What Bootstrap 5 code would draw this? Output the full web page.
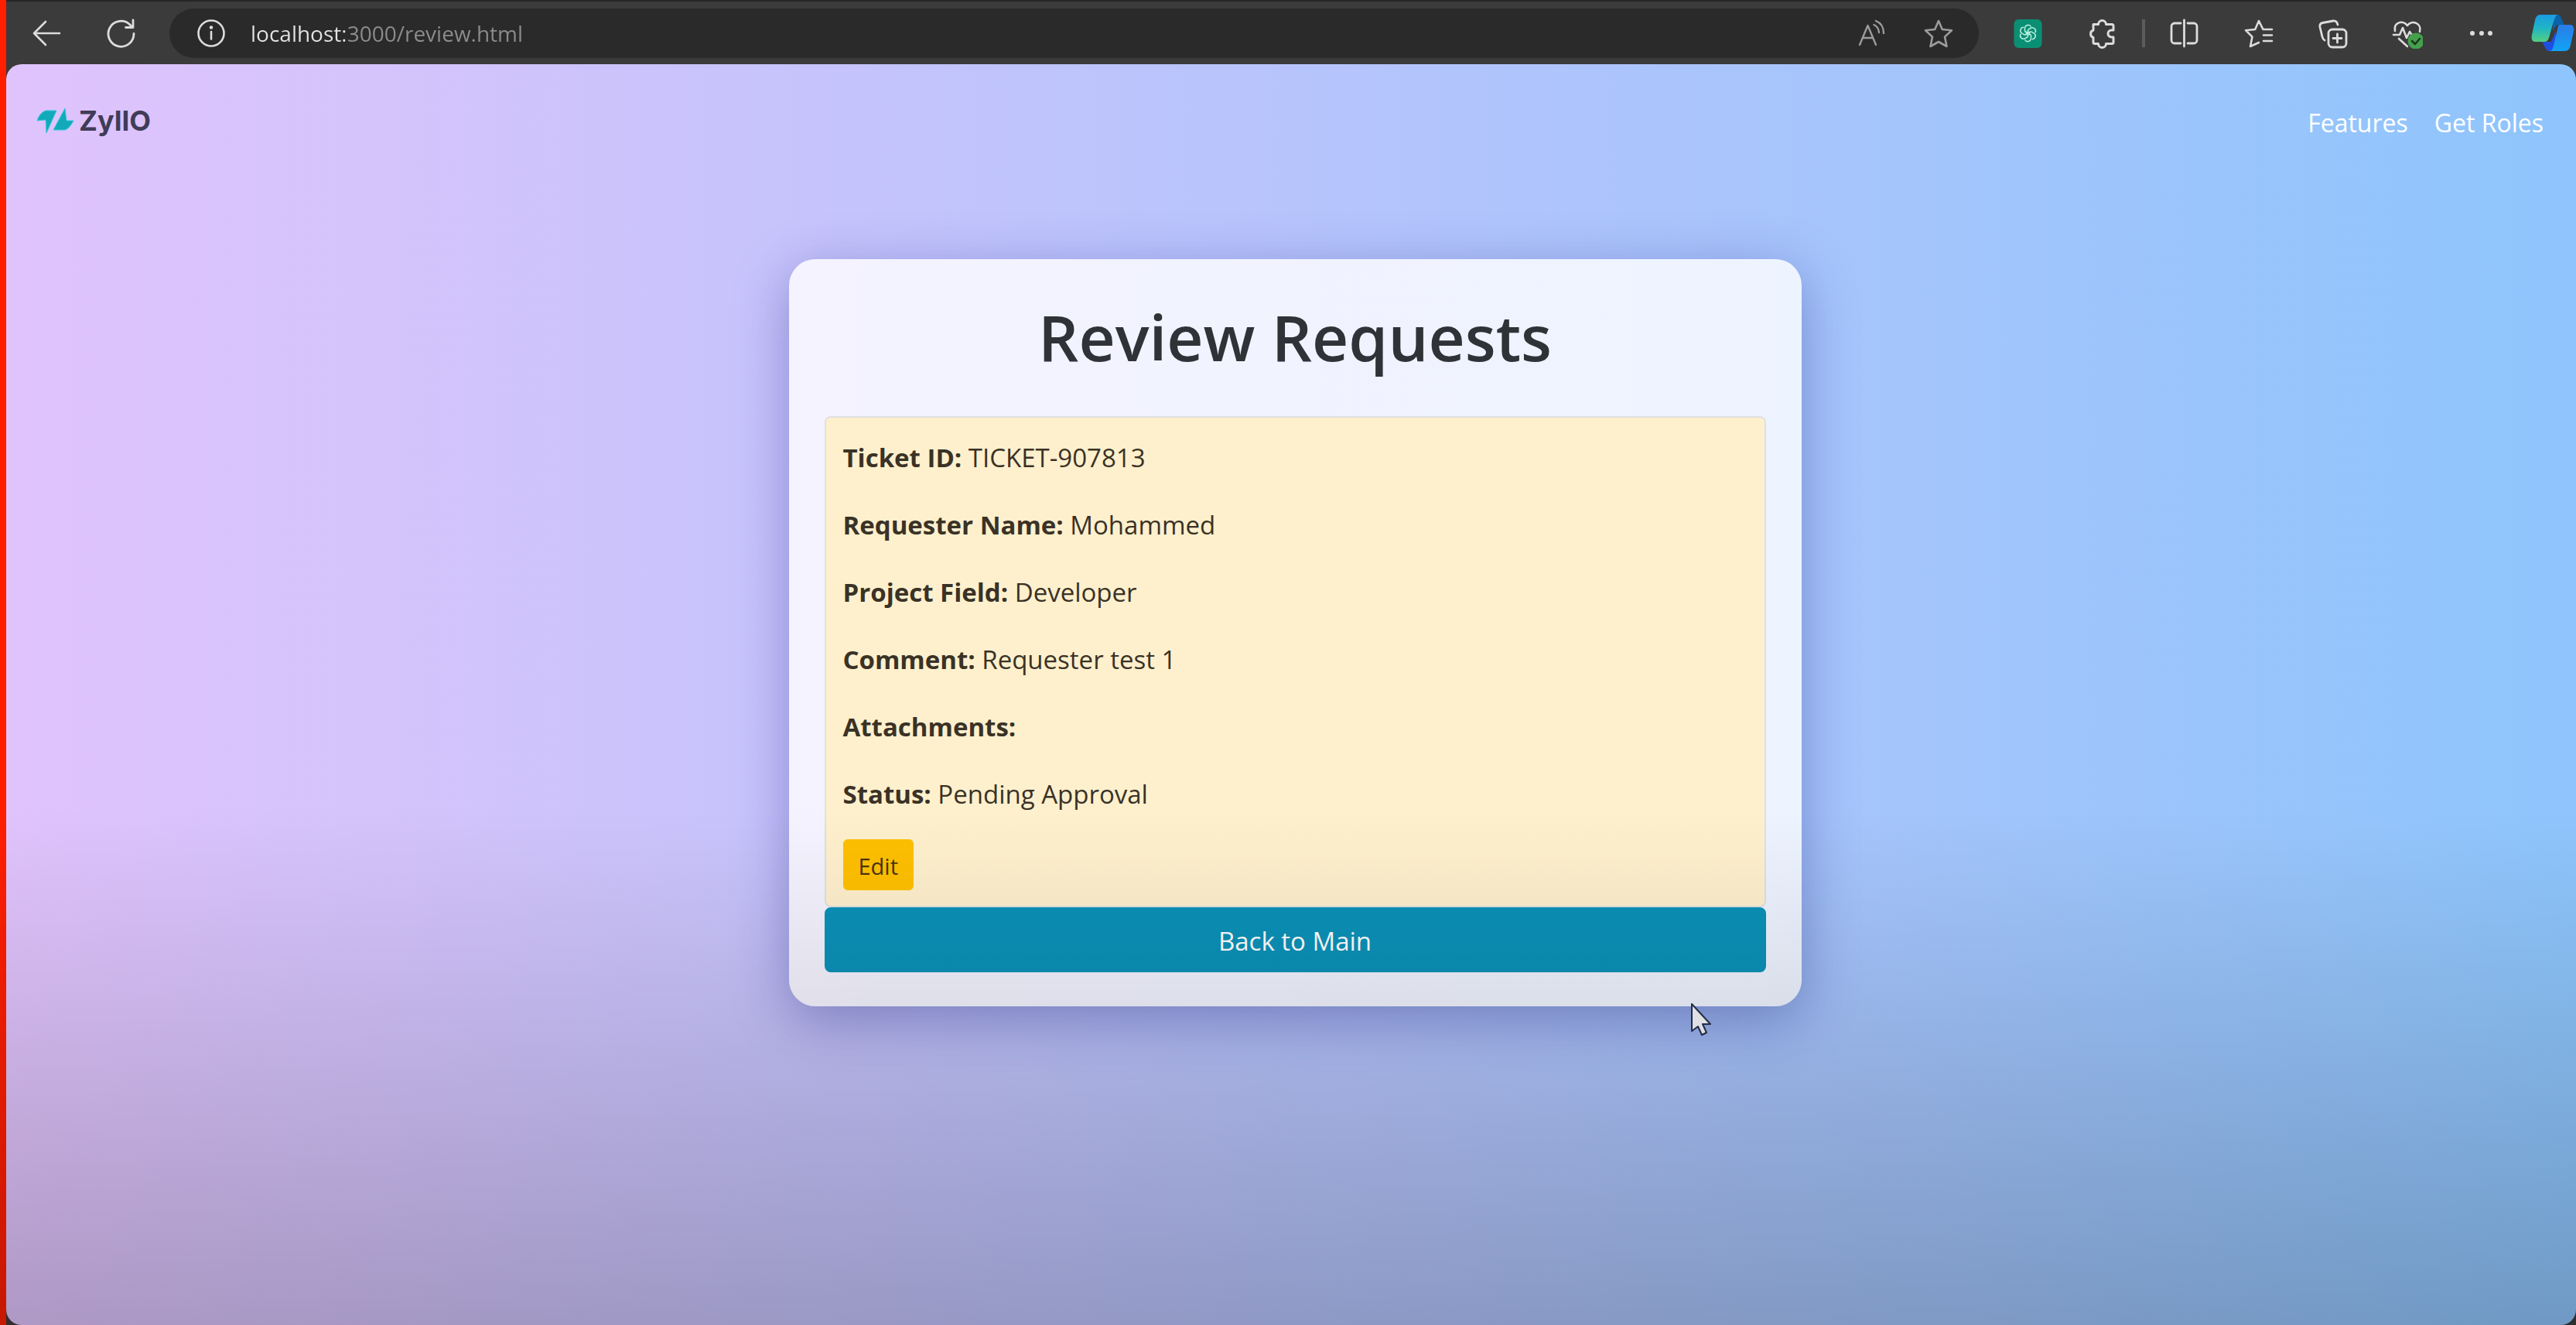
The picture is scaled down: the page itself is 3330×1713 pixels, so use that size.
<!DOCTYPE html>
<html lang="en">
<head>
<meta charset="utf-8">
<meta name="viewport" content="width=device-width, initial-scale=1">
<title>Review Requests</title>
<link href="https://cdn.jsdelivr.net/npm/bootstrap@5.3.0/dist/css/bootstrap.min.css" rel="stylesheet">
<style>
  body { font-family: "Open Sans", "Noto Sans", sans-serif; font-size: 33px; line-height: 52px; color: #212529; background: #3b3b3b; }
  .edge-strip { width: 8px; background: #ff1e00; }
  .toolbar { height: 83px; padding: 0 2px 0 34px; background: #3b3b3b; border-top: 2px solid #262626; color: #dcdcdc; }
  .tool { width: 40px; height: 40px; padding: 0; border: 0; background: none; color: inherit; display: block; flex: none; }
  .tool svg { width: 40px; height: 40px; display: block; }
  .tool-wide, .tool-wide svg { width: 56px; height: 56px; }
  .tool-wide { margin-left: -12px; }
  .tools-left { gap: 54px; margin-right: 43px; }
  .tools-right { gap: 56px; margin-left: 44px; }
  .tool-sep { width: 4px; height: 36px; margin: 0 -25px; background: #5c5c5c; }
  .address { height: 64px; padding: 0 32px 0 35px; border-radius: 32px; background: #2a2a2a; gap: 30px; }
  .address input { font-size: 28px; line-height: 40px; color: #9a9a9a; border: 0; outline: 0; padding: 0; height: 48px;
    background: linear-gradient(90deg, #e4e4e4 122px, #8c8c8c 122px); -webkit-background-clip: text; background-clip: text; -webkit-text-fill-color: transparent; }
  .address-icons { gap: 46px; color: #9b9b9b; }
  .viewport { border-radius: 20px; background: linear-gradient(90deg, #e0c3fc, #8ec5fc); }
  .site-nav { padding: 44px 42px 0 38px; }
  .brand-name { font-family: Inter, sans-serif; font-weight: 700; font-size: 36px; line-height: 52px; color: #403c58; gap: 6px; }
  .site-nav .nav { gap: 34px; padding-top: 6px; }
  .site-nav .nav-link { color: #fff; padding: 0; font-size: 32px; }
  .main-area { padding: 150px 0 0 10px; }
  .review-panel { width: 100%; max-width: 1309px; padding: 48px 46px 44px; border-radius: 34px; background: rgba(255,255,255,.8); box-shadow: 0 17px 70px rgba(31,38,135,.37); }
  .review-panel h1 { font-size: 82px; line-height: 104px; font-weight: 600; margin: 0 0 51px; color: #2f3338; }
  .ticket { padding: 26px 24px 20px 22px; background: #fff0cd; border: 2px solid #dfe0e0; border-radius: 8px; color: #3a3226; }
  .ticket p { margin: 0 0 35px; }
  .ticket p:last-of-type { margin-bottom: 32px; }
  .btn-edit { font-size: 29px; line-height: 42px; padding: 12px 18px 8px; border: 2px solid #ffc107; border-radius: 6px; background: #ffc000; color: #4a3510; }
  .btn-back { font-size: 33px; line-height: 52px; padding: 16px 14px 12px; border: 2px solid #0b91b8; border-radius: 8px; background: #0b91b8; color: #fff; }
  .btn-back:hover, .btn-edit:hover { background: inherit; }
  .shade { inset: 0; pointer-events: none; background: linear-gradient(transparent 61%, rgba(0,0,0,.22)); z-index: 5; }
  .pointer { left: 2184px; top: 1296px; width: 32px; height: 44px; pointer-events: none; z-index: 4; }
</style>
<script src="https://cdn.jsdelivr.net/npm/bootstrap@5.3.0/dist/js/bootstrap.bundle.min.js"></script>
</head>
<body class="d-flex min-vh-100 position-relative">
<div class="edge-strip flex-shrink-0"></div>
<div class="d-flex flex-column flex-grow-1">
  <header class="toolbar d-flex align-items-center">
    <div class="tools-left d-flex">
      <button class="tool" type="button" aria-label="Back"><svg viewBox="0 0 40 40" fill="none" stroke="currentColor" stroke-width="2.6" stroke-linecap="round" stroke-linejoin="round"><path d="M35 20H2M17 5L2 20l15 15"/></svg></button>
      <button class="tool" type="button" aria-label="Reload"><svg viewBox="0 0 40 40" fill="none" stroke="currentColor" stroke-width="2.8" stroke-linecap="round" stroke-linejoin="round"><path d="M37 20.500A16.500 16.500 0 1 1 31 8l4 4M36 3v9.500h-9.500"/></svg></button>
    </div>
    <div class="address d-flex align-items-center flex-grow-1">
      <svg width="40" height="40" viewBox="0 0 40 40" fill="none" stroke="currentColor" stroke-width="2.600" stroke-linecap="round" aria-hidden="true"><circle cx="19" cy="20" r="16.500"/><path d="M19 18v9.500"/><circle cx="19" cy="12.500" r="1" fill="currentColor"/></svg>
      <input class="flex-grow-1" type="text" aria-label="Address" value="localhost:3000/review.html">
      <div class="address-icons d-flex">
        <button class="tool" type="button" aria-label="Read aloud"><svg viewBox="0 0 40 40" fill="none" stroke="currentColor" stroke-width="2.400" stroke-linecap="round" stroke-linejoin="round"><path d="M4 35L14.500 10 25 35M8 26h13M22.500 9q6 3 6.500 10M25 4q10 4 10 16"/></svg></button>
        <button class="tool" type="button" aria-label="Add to favourites"><svg viewBox="0 0 40 40" fill="none" stroke="currentColor" stroke-width="2.600" stroke-linejoin="round"><path d="M20 4l4.800 11L37 16.200l-9 8.400L30.500 37 20 31 9.500 37 12 24.600 3 16.200 15.200 15z"/></svg></button>
      </div>
    </div>
    <div class="tools-right d-flex align-items-center">
      <button class="tool" type="button" aria-label="Assistant extension"><svg viewBox="0 0 40 40"><rect x="1.500" y="2" width="36" height="37" rx="6" fill="#0b8f74"/><g transform="translate(19.500 20)" fill="none" stroke="#b9f0df" stroke-width="1.500"><path id="petal" d="M-4-2.500V-7a4.300 4.300 0 0 1 8-1.500M-4-2.500L3.500 2"/><use href="#petal" transform="rotate(60)"/><use href="#petal" transform="rotate(120)"/><use href="#petal" transform="rotate(180)"/><use href="#petal" transform="rotate(240)"/><use href="#petal" transform="rotate(300)"/></g></svg></button>
      <button class="tool" type="button" aria-label="Extensions"><svg viewBox="0 0 40 40" fill="none" stroke="currentColor" stroke-width="3" stroke-linejoin="round"><path d="M8 8.500h6.500a5 5 0 0 1 10 0H32a2 2 0 0 1 2 2V16h-2.500a4.500 4.500 0 0 0 0 9H34v6.500a2 2 0 0 1-2 2h-7.500a5 5 0 0 1-10 0H10a2 2 0 0 1-2-2V25.500a5 5 0 0 1 0-9.500z"/></svg></button>
      <div class="tool-sep"></div>
      <button class="tool" type="button" aria-label="Split screen"><svg viewBox="0 0 40 40" fill="none" stroke="currentColor" stroke-width="2.800" stroke-linecap="round" stroke-linejoin="round"><path d="M15 7H7a4 4 0 0 0-4 4v18a4 4 0 0 0 4 4h8M24 7h8a4 4 0 0 1 4 4v18a4 4 0 0 1-4 4h-8M19.500 3v34"/></svg></button>
      <button class="tool" type="button" aria-label="Favourites"><svg viewBox="0 0 40 40" fill="none" stroke="currentColor" stroke-width="2.600" stroke-linecap="round" stroke-linejoin="round"><path d="M37 15H25.500L20 4l-4.800 11L3 16.200l8.500 8.400L9 37l11-5M26 22.500h11M26 30h11"/></svg></button>
      <button class="tool" type="button" aria-label="Collections"><svg viewBox="0 0 40 40" fill="none" stroke="currentColor" stroke-width="2.800" stroke-linecap="round" stroke-linejoin="round"><rect x="14" y="15" width="23" height="23" rx="5"/><path d="M25.500 21v11M20 26.500h11M9 29c-2-1-2.500-2.500-3-4.500L3 12c-.5-3 .5-5 3.500-5.500L20 4c3-.5 5 1 6 5"/></svg></button>
      <button class="tool" type="button" aria-label="Browser essentials"><svg viewBox="0 0 40 40" fill="none" stroke="currentColor" stroke-width="2.600" stroke-linecap="round" stroke-linejoin="round"><path d="M4 17C2 6 14 2 20 10 26 2 39 7 36 18M2 22h8l4-9 5 13 4-8 2 3M9 27l11 10"/><circle cx="31" cy="30" r="10.500" fill="#45a14b" stroke="none"/><path d="M26 30l4 4 6-7" stroke="#1d3a1f"/></svg></button>
      <button class="tool" type="button" aria-label="More"><svg viewBox="0 0 40 40" fill="currentColor"><circle cx="8" cy="20" r="3"/><circle cx="20" cy="20" r="3"/><circle cx="31" cy="20" r="3"/></svg></button>
      <button class="tool tool-wide" type="button" aria-label="Copilot"><svg viewBox="0 0 56 56"><defs><linearGradient id="ca" x1="0" y1="0" x2="0" y2="1"><stop offset="0" stop-color="#1a9be4"/><stop offset=".5" stop-color="#20b5c4"/><stop offset="1" stop-color="#55cf80"/></linearGradient><linearGradient id="cb" x1="0" y1="0" x2="0" y2="1"><stop offset="0" stop-color="#2b7be8"/><stop offset="1" stop-color="#11a4f5"/></linearGradient></defs><path d="M28 4h6c4 0 5 4 7 9l2 4h-6c-5 0-7 4-9 9z" fill="#0b62a8"/><path d="M14 39h12l6-15v20c-1 5-3 7-6 7h-3c-4 0-5-6-9-12z" fill="#1d4fe0"/><path d="M12 4h22c-3 2-4 6-6 12l-5 18c-1 3-3 5-6 5H6c-5 0-6-4-5-9L5 11c1-4 3-7 7-7z" fill="url(#ca)"/><path d="M37 17h13c4 0 6 3 5 8l-4 18c-1 5-3 8-8 8H23c4 0 5-3 6-7l5-21c.500-3 1-6 3-6z" fill="url(#cb)"/></svg></button>
    </div>
  </header>

  <div class="viewport flex-grow-1">
    <nav class="site-nav d-flex justify-content-between align-items-center">
      <a class="brand-name d-flex align-items-center text-decoration-none" href="#">
        <svg width="50" height="34" viewBox="0 0 50 34" aria-hidden="true"><g fill="#12aab8" stroke="#35c8dc" stroke-width="1"><path d="M2 17Q5 7 13 4h14L14 33l-1-17z"/><path d="M38 1l2 16h9Q44 27 38 29H23z"/></g></svg>
        <span>ZyllO</span>
      </a>
      <ul class="nav align-items-center">
        <li class="nav-item"><a class="nav-link" href="#">Features</a></li>
        <li class="nav-item"><a class="nav-link" href="#">Get Roles</a></li>
      </ul>
    </nav>
    <main class="main-area d-flex justify-content-center">
      <section class="review-panel">
        <h1 class="text-center">Review Requests</h1>
        <div class="ticket">
          <p><strong>Ticket ID:</strong> TICKET-907813</p>
          <p><strong>Requester Name:</strong> Mohammed</p>
          <p><strong>Project Field:</strong> Developer</p>
          <p><strong>Comment:</strong> Requester test 1</p>
          <p><strong>Attachments:</strong></p>
          <p><strong>Status:</strong> Pending Approval</p>
          <button class="btn btn-edit d-block" type="button">Edit</button>
        </div>
        <a class="btn btn-back d-block" href="#">Back to Main</a>
      </section>
    </main>
  </div>
</div>
<svg class="pointer position-absolute" viewBox="0 0 32 44" aria-hidden="true"><path d="M3 2v35l8-6 5 11 6-3-5-11h10z" fill="#f4f6fa" stroke="#26304f" stroke-width="2" stroke-linejoin="round"/></svg>
<div class="shade position-absolute"></div>
</body>
</html>
